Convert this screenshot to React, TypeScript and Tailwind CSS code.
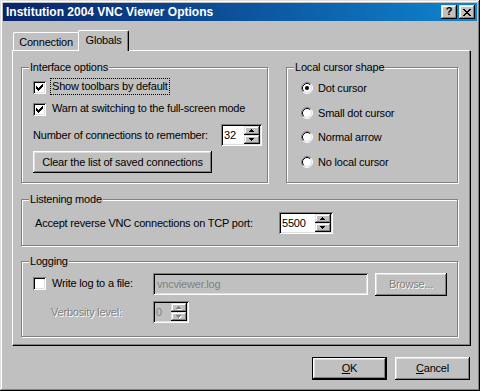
import React from "react";

const SUNKEN =
  "shadow-[inset_1px_1px_#808080,inset_-1px_-1px_#ffffff,inset_2px_2px_#000000,inset_-2px_-2px_#dfdfdf]";
const RAISED =
  "shadow-[inset_-1px_-1px_#000000,inset_1px_1px_#ffffff,inset_-2px_-2px_#808080,inset_2px_2px_#dfdfdf]";
const RAISED_ALT =
  "shadow-[inset_-1px_-1px_#000000,inset_1px_1px_#dfdfdf,inset_-2px_-2px_#808080,inset_2px_2px_#ffffff]";
const ETCHED = "text-[#808080] [text-shadow:1px_1px_0_#ffffff]";

function CheckMark() {
  const starts = [2, 3, 4, 3, 2, 1, 0];
  return (
    <svg width="7" height="7" viewBox="0 0 7 7" shapeRendering="crispEdges">
      {starts.map((y, x) => (
        <rect key={x} x={x} y={y} width={1} height={3} fill="#000" />
      ))}
    </svg>
  );
}

function CheckBox({ checked, className = "" }: { checked?: boolean; className?: string }) {
  return (
    <div
      className={`w-[13px] h-[13px] shrink-0 bg-white flex items-center justify-center ${SUNKEN} ${className}`}
    >
      {checked ? <CheckMark /> : null}
    </div>
  );
}

function Radio({ checked }: { checked?: boolean }) {
  return (
    <svg width="12" height="12" viewBox="0 0 12 12" className="shrink-0">
      <circle cx="6" cy="6" r="5" fill="#fff" />
      <path d="M2.11 9.89 A5.5 5.5 0 0 1 9.89 2.11" stroke="#808080" fill="none" />
      <path d="M9.89 2.11 A5.5 5.5 0 0 1 2.11 9.89" stroke="#ffffff" fill="none" />
      <path d="M2.82 9.18 A4.5 4.5 0 0 1 9.18 2.82" stroke="#000000" fill="none" />
      <path d="M9.18 2.82 A4.5 4.5 0 0 1 2.82 9.18" stroke="#dfdfdf" fill="none" />
      {checked ? <circle cx="6" cy="6" r="2" fill="#000" /> : null}
    </svg>
  );
}

function Arrow({ down = false, disabled = false }: { down?: boolean; disabled?: boolean }) {
  const rows: [number, number][] = down
    ? [
        [0, 5],
        [1, 3],
        [2, 1],
      ]
    : [
        [2, 5],
        [1, 3],
        [0, 1],
      ];
  const draw = (dx: number, dy: number, fill: string) =>
    rows.map(([y, w], i) => (
      <rect key={`${fill}${i}`} x={(5 - w) / 2 + dx} y={y + dy} width={w} height={1} fill={fill} />
    ));
  return (
    <svg width="6" height="4" viewBox="0 0 6 4" shapeRendering="crispEdges">
      {disabled ? draw(1, 1, "#ffffff") : null}
      {draw(0, 0, disabled ? "#808080" : "#000000")}
    </svg>
  );
}

function CloseGlyph() {
  const rows = ["11....11", ".11..11.", "..1111..", "...11...", "..1111..", ".11..11.", "11....11"];
  return (
    <svg width="8" height="7" viewBox="0 0 8 7" shapeRendering="crispEdges">
      {rows.flatMap((r, y) =>
        r.split("").map((c, x) =>
          c === "1" ? <rect key={`${x}-${y}`} x={x} y={y} width={1} height={1} fill="#000" /> : null
        )
      )}
    </svg>
  );
}

function Spin({ value, w, disabled = false }: { value: string; w: string; disabled?: boolean }) {
  return (
    <div
      className={`${w} h-[22px] shrink-0 flex p-[2px] ${
        disabled ? "bg-[#c0c0c0] text-[#808080]" : "bg-white"
      } ${SUNKEN}`}
    >
      <div className="flex-1 pl-[1px] leading-[18px]">{value}</div>
      <div className="w-[16px] flex flex-col">
        <div className={`h-[9px] bg-[#c0c0c0] flex items-center justify-center ${RAISED_ALT}`}>
          <Arrow disabled={disabled} />
        </div>
        <div className={`h-[9px] bg-[#c0c0c0] flex items-center justify-center ${RAISED_ALT}`}>
          <Arrow down disabled={disabled} />
        </div>
      </div>
    </div>
  );
}

function Group({
  title,
  className,
  children,
}: {
  title: string;
  className: string;
  children: React.ReactNode;
}) {
  return (
    <div
      className={`shrink-0 border border-[#808080] shadow-[inset_1px_1px_#ffffff,1px_1px_#ffffff] flex flex-col ${className}`}
    >
      <div className="self-start ml-[7px] -mt-[7px] px-[1px] h-[13px] leading-[13px] bg-[#c0c0c0] whitespace-nowrap">
        {title}
      </div>
      {children}
    </div>
  );
}

export default function App() {
  return (
    <div
      className={`w-[480px] h-[391px] bg-[#c0c0c0] p-[3px] flex flex-col text-black text-[11px] tracking-[-0.2px] font-['Liberation_Sans',Arial,sans-serif] shadow-[inset_-1px_-1px_#000000,inset_1px_1px_#dfdfdf,inset_-2px_-2px_#808080,inset_2px_2px_#ffffff]`}
    >
      {/* Title bar */}
      <div className="h-[18px] shrink-0 flex items-center pl-[3px] pr-[2px] bg-linear-to-r from-[#0a246a] to-[#1084d0]">
        <span className="flex-1 text-white font-bold text-[12px] tracking-normal leading-[18px] whitespace-nowrap">
          Institution 2004 VNC Viewer Options
        </span>
        <div
          className={`w-[16px] h-[14px] bg-[#c0c0c0] flex items-center justify-center text-[11px] font-bold leading-none tracking-normal pb-[1px] ${RAISED_ALT}`}
        >
          ?
        </div>
        <div
          className={`ml-[2px] w-[16px] h-[14px] bg-[#c0c0c0] flex items-center justify-center ${RAISED_ALT}`}
        >
          <CloseGlyph />
        </div>
      </div>

      {/* Tabs */}
      <div className="ml-[9px] mr-[6px] mt-[9px] h-[21px] shrink-0 flex items-end">
        <div className="w-px h-px bg-white" />
        <div className="w-[65px] h-[19px] border-t border-l border-b border-white rounded-tl-[2px] flex items-center justify-center pt-[1px] whitespace-nowrap">
          Connection
        </div>
        <div className="w-[51px] h-[21px] border-t border-l border-r border-t-white border-l-white border-r-black rounded-t-[2px] shadow-[inset_-1px_0_#808080] flex items-center justify-center pb-[1px] whitespace-nowrap">
          Globals
        </div>
        <div className="flex-1 h-px bg-white mr-[2px]" />
      </div>

      {/* Panel */}
      <div className="ml-[9px] mr-[6px] h-[295px] shrink-0 border-l border-r border-b border-l-white border-r-black border-b-black shadow-[inset_-1px_-1px_#808080] pl-[8px] pt-[16px] flex flex-col">
        <div className="flex">
          <Group title="Interface options" className="w-[247px] h-[116px]">
            <div className="mt-[4px] ml-[11px] flex items-start">
              <CheckBox checked className="mt-[3px]" />
              <span className="ml-[4px] h-[17px] px-[1px] leading-[15px] border border-dotted border-black whitespace-nowrap">
                Show toolbars by default
              </span>
            </div>
            <div className="mt-[5px] ml-[11px] flex items-start">
              <CheckBox checked className="mt-[3px]" />
              <span className="ml-[4px] h-[17px] px-[1px] leading-[15px] border border-transparent whitespace-nowrap">
                Warn at switching to the full-screen mode
              </span>
            </div>
            <div className="mt-[7px] ml-[11px] h-[22px] flex items-center">
              <span className="w-[188px] whitespace-nowrap">Number of connections to remember:</span>
              <Spin value="32" w="w-[41px]" />
            </div>
            <div
              className={`mt-[5px] ml-[11px] w-[179px] h-[22px] flex items-center justify-center whitespace-nowrap ${RAISED}`}
            >
              Clear the list of saved connections
            </div>
          </Group>

          <Group title="Local cursor shape" className="ml-[18px] w-[172px] h-[116px]">
            <div className="mt-[6px] ml-[14px] h-[16px] flex items-center">
              <Radio checked />
              <span className="ml-[5px] whitespace-nowrap">Dot cursor</span>
            </div>
            <div className="mt-[9px] ml-[14px] h-[16px] flex items-center">
              <Radio />
              <span className="ml-[5px] whitespace-nowrap">Small dot cursor</span>
            </div>
            <div className="mt-[8px] ml-[14px] h-[16px] flex items-center">
              <Radio />
              <span className="ml-[5px] whitespace-nowrap">Normal arrow</span>
            </div>
            <div className="mt-[9px] ml-[14px] h-[16px] flex items-center">
              <Radio />
              <span className="ml-[5px] whitespace-nowrap">No local cursor</span>
            </div>
          </Group>
        </div>

        <Group title="Listening mode" className="mt-[16px] w-[437px] h-[47px]">
          <div className="mt-[6px] ml-[13px] h-[22px] flex items-center">
            <span className="w-[244px] whitespace-nowrap">Accept reverse VNC connections on TCP port:</span>
            <Spin value="5500" w="w-[54px]" />
          </div>
        </Group>

        <Group title="Logging" className="mt-[15px] w-[437px] h-[76px]">
          <div className="mt-[5px] ml-[11px] h-[23px] flex items-start">
            <div className="w-[120px] flex items-start">
              <CheckBox className="mt-[4px]" />
              <span className="ml-[6px] mt-[4px] leading-[13px] whitespace-nowrap">Write log to a file:</span>
            </div>
            <div
              className={`w-[215px] h-[22px] bg-[#c0c0c0] text-[#808080] pl-[4px] leading-[22px] whitespace-nowrap ${SUNKEN}`}
            >
              vncviewer.log
            </div>
            <div
              className={`ml-[7px] w-[72px] h-[23px] flex items-center justify-center whitespace-nowrap ${RAISED}`}
            >
              <span className={ETCHED}>Browse...</span>
            </div>
          </div>
          <div className="mt-[5px] ml-[11px] h-[22px] flex items-center">
            <div className="w-[120px] pl-[18px]">
              <span className={`${ETCHED} whitespace-nowrap`}>Verbosity level:</span>
            </div>
            <Spin value="0" w="w-[36px]" disabled />
          </div>
        </Group>
      </div>

      {/* Buttons */}
      <div className="mt-[11px] mr-[7px] flex justify-end gap-[8px]">
        <div
          className={`w-[75px] h-[23px] border border-black flex items-center justify-center ${RAISED}`}
        >
          <span>
            <span className="underline underline-offset-[1px]">O</span>K
          </span>
        </div>
        <div className={`w-[75px] h-[23px] flex items-center justify-center ${RAISED}`}>
          <span>
            <span className="underline underline-offset-[1px]">C</span>ancel
          </span>
        </div>
      </div>
    </div>
  );
}
